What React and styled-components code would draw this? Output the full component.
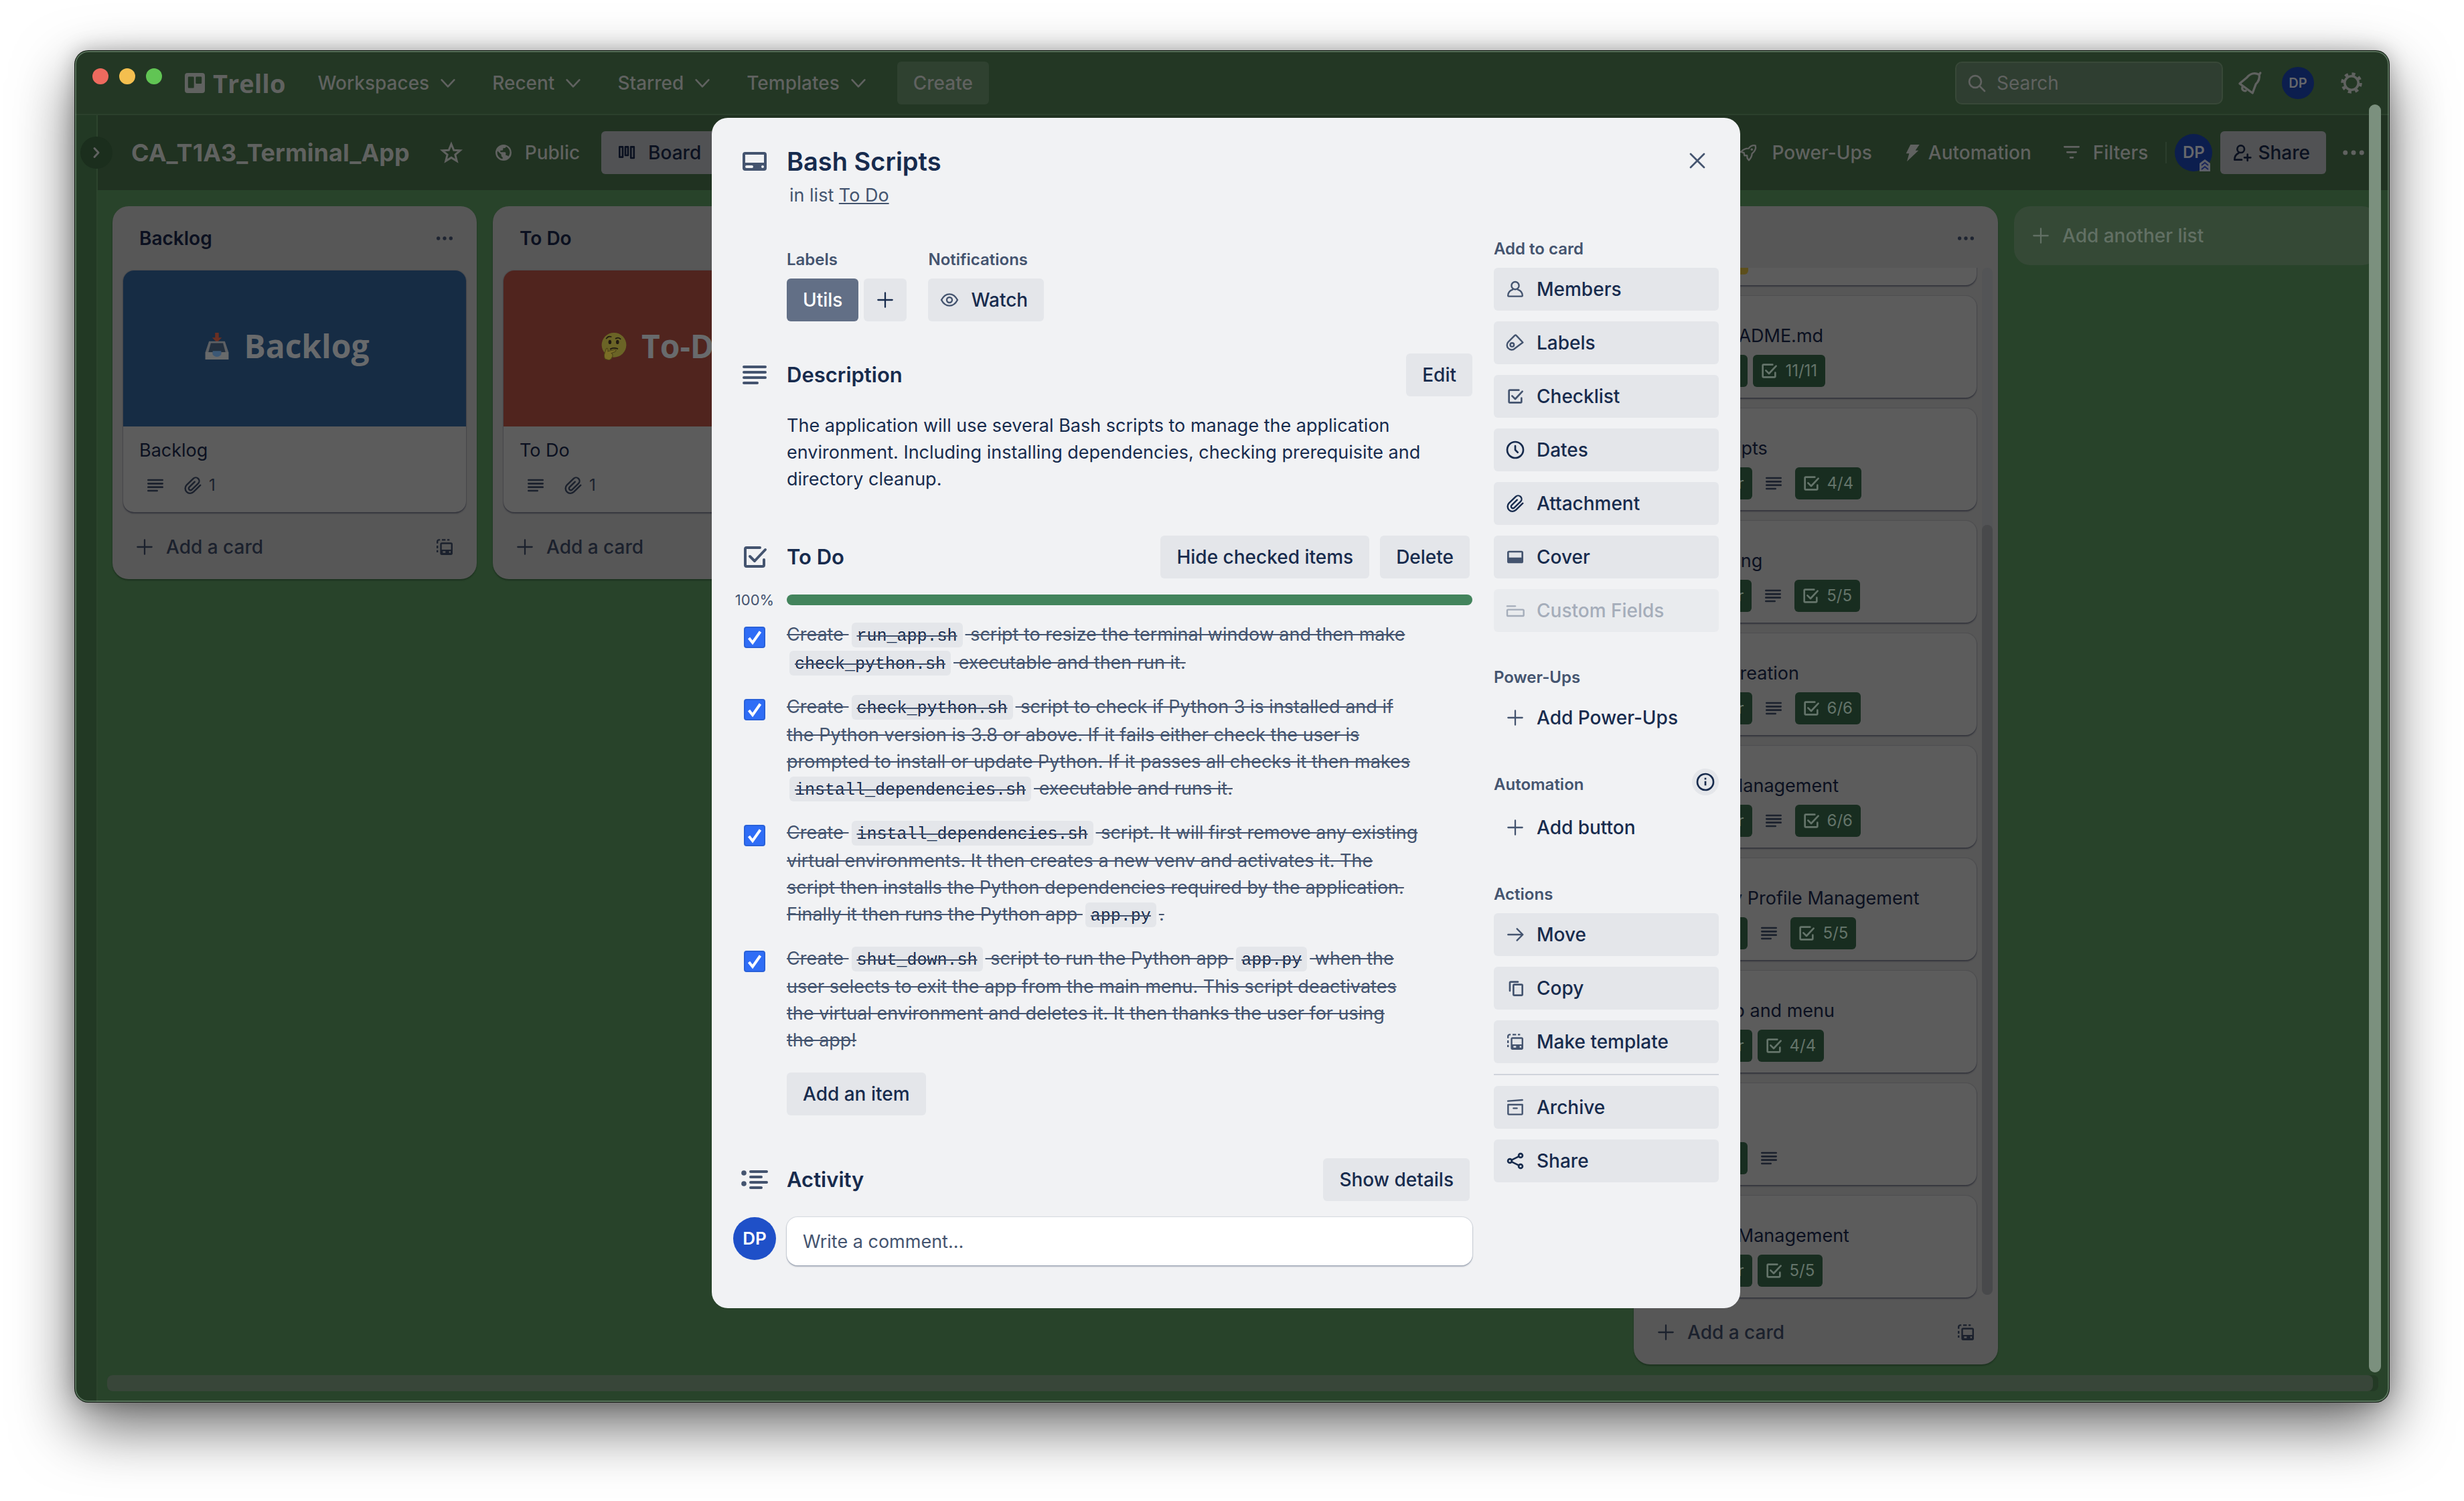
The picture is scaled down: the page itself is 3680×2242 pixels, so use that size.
import React from 'react';
import styled, { createGlobalStyle, css } from 'styled-components';

const GlobalStyle = createGlobalStyle`
  *, *::before, *::after { box-sizing: border-box; }
  body {
    margin: 0;
    background: #fff;
    font-family: Inter, "Liberation Sans", sans-serif;
    font-size: 28px;
    line-height: 40px;
  }
  button, input { font: inherit; color: inherit; border: 0; margin: 0; padding: 0; background: none; }
  h1, h2, h3, p, ul { margin: 0; padding: 0; font-weight: inherit; font-size: inherit; }
  ul { list-style: none; }
  a { color: inherit; }
`;

/* ---------- icons ---------- */

const Svg = styled.svg`
  flex: none;
  display: block;
  width: ${p => p.$size}px;
  height: ${p => p.$size}px;
  color: ${p => p.$tone || 'inherit'};
`;

const S = { fill: 'none', stroke: 'currentColor', strokeWidth: 2, strokeLinecap: 'round', strokeLinejoin: 'round' };

const SHAPES = {
  card: (
    <path fill="currentColor" fillRule="evenodd" d="M3 7a2 2 0 0 1 2-2h14a2 2 0 0 1 2 2v10a2 2 0 0 1-2 2H5a2 2 0 0 1-2-2zM5 7h14v6H5zM6 15h4a1 1 0 0 1 0 2H6a1 1 0 0 1 0-2zM18 15a1 1 0 1 1 0 2 1 1 0 0 1 0-2z" />
  ),
  lines: <path {...S} d="M4 6h16M4 10h16M4 14h16M4 18h10" />,
  check: <path {...S} d="M16 5H6a1 1 0 0 0-1 1v12a1 1 0 0 0 1 1h12a1 1 0 0 0 1-1v-4M8.500 11.500l3.500 3.500 8-8.500" />,
  activity: (
    <>
      <path {...S} d="M9 6h12M9 10h8M9 14h12M9 18h8" />
      <circle cx="4" cy="7" r="1.900" fill="currentColor" />
      <circle cx="4" cy="15" r="1.900" fill="currentColor" />
    </>
  ),
  user: (
    <>
      <circle {...S} strokeWidth="1.800" cx="12" cy="8" r="4.200" />
      <path {...S} strokeWidth="1.800" d="M9 12.500c-3 1-5 3.500-5.100 6.600 0 .6.400.9.900.9h14.400c.5 0 .9-.300.900-.900-.100-3.100-2.100-5.600-5.100-6.600" />
    </>
  ),
  tag: (
    <>
      <path {...S} strokeWidth="1.800" d="M11.600 3.700 4.300 11a5 5 0 0 0 0 7.200 5 5 0 0 0 7.200.200l9-6.800-7.300-7.700a1.200 1.200 0 0 0-1.600-.200z" />
      <circle {...S} strokeWidth="1.800" cx="8.500" cy="14.300" r="2.100" />
    </>
  ),
  clock: (
    <>
      <circle {...S} cx="12" cy="12" r="9" />
      <path {...S} d="M12 7.500V12l2.800 2.800" />
    </>
  ),
  clip: <path {...S} strokeWidth="1.800" d="m20.500 11.800-7.700 7.500a5.400 5.400 0 0 1-7.700 0 5.400 5.400 0 0 1 0-7.700l7.400-7.200a3.900 3.900 0 0 1 5.500 0 3.900 3.900 0 0 1 0 5.500l-7.100 6.900a2 2 0 0 1-2.900 0 2 2 0 0 1 0-2.900l6.100-5.900" />,
  cover: <path fill="currentColor" fillRule="evenodd" d="M3 7a2 2 0 0 1 2-2h14a2 2 0 0 1 2 2v10a2 2 0 0 1-2 2H5a2 2 0 0 1-2-2zM5 7h14v5.500H5z" />,
  fields: (
    <>
      <path {...S} strokeWidth="1.800" d="M3 7h9" />
      <rect {...S} strokeWidth="1.800" x="3" y="11" width="18.500" height="7" rx="1" />
    </>
  ),
  plus: <path {...S} strokeWidth="1.700" d="M12 4v16M4 12h16" />,
  arrow: <path {...S} strokeWidth="1.800" d="M4 12h16M14 5.500l6.500 6.500-6.500 6.500" />,
  copy: (
    <>
      <path {...S} d="M6 15V6a1 1 0 0 1 1-1h8" />
      <rect {...S} x="10" y="8" width="10" height="12" rx="1" />
    </>
  ),
  template: (
    <>
      <path fill="currentColor" fillRule="evenodd" d="M7 9a2 2 0 0 1 2-2h10a2 2 0 0 1 2 2v10a2 2 0 0 1-2 2H9a2 2 0 0 1-2-2zM8.800 8.800h10.400V15H8.800zM10 16.700h3v1.800h-3zM17 16.700h1.800v1.800H17z" />
      <path {...S} strokeWidth="1.800" strokeLinecap="butt" d="M3.900 8V6a2 2 0 0 1 2-2h1M9 4h4M15 4h2.500M3.900 10.500v3M3.900 15.500V18" />
    </>
  ),
  archive: (
    <>
      <path {...S} strokeWidth="1.800" d="M3.800 5 20 3.800" />
      <path {...S} strokeWidth="1.800" d="M4 9h16v10a1 1 0 0 1-1 1H5a1 1 0 0 1-1-1zM10 13h4" />
    </>
  ),
  share: (
    <>
      <circle {...S} cx="6" cy="12" r="2.200" />
      <circle {...S} cx="18" cy="6" r="2.200" />
      <circle {...S} cx="18" cy="18" r="2.200" />
      <path {...S} d="m8 11 8-4M8 13l8 4" />
    </>
  ),
  eye: (
    <>
      <path {...S} strokeWidth="1.800" d="M3 12C5.200 7.800 8.400 5.500 12 5.500s6.800 2.300 9 6.500c-2.200 4.200-5.400 6.500-9 6.500S5.200 16.200 3 12z" />
      <circle {...S} strokeWidth="1.800" cx="12" cy="12" r="3" />
    </>
  ),
  info: (
    <>
      <circle {...S} cx="12" cy="12" r="9" />
      <path {...S} strokeLinecap="butt" d="M12 11v5M12 7.300v2" />
    </>
  ),
  close: <path {...S} strokeWidth="2" d="m4.500 4.500 15 15M19.500 4.500l-15 15" />,
  down: <path {...S} d="m5 8.500 7 7.500 7-7.500" />,
  right: <path {...S} strokeWidth="3" d="m9 5.500 6 6.500-6 6.500" />,
  star: <path {...S} strokeLinejoin="miter" d="m12 3.500 2.500 6 6.300.400-4.900 4.100 1.600 6.300L12 16.900l-5.500 3.400 1.600-6.300-4.900-4.100 6.300-.400z" />,
  globe: <path fill="currentColor" fillRule="evenodd" d="M12 3a9 9 0 1 0 0 18 9 9 0 0 0 0-18zm-1 16a7 7 0 0 1-5.700-8.800L9.500 14v1c0 1 .5 2 1.500 2zm6.300-2.600c-.3-.800-1-1.400-1.900-1.400H14.500v-2.500c0-.500-.500-1-1-1h-5V9.500h2c.600 0 1-.500 1-1v-1.500h1.500c1 0 1.800-.800 1.800-1.700A7 7 0 0 1 17.300 16.400z" />,
  board: <path {...S} d="M4 5.500h3.500V17H4zM10.500 5.500h3V15h-3zM16.700 5.500h3.400V18h-3.400z" />,
  rocket: (
    <>
      <path {...S} strokeWidth="1.800" d="M20 4c-3-.6-5.500.4-7.500 3.200-3.500 0-6.500 1.300-8.700 4l3.400 1 .6 3h2.800l.4 3.200 1.700 2.100c2.300-2.300 3.500-4.500 3.500-7.300C19.500 10.500 21 7.500 20 4z" />
      <circle cx="16" cy="8.500" r="1.300" fill="currentColor" />
    </>
  ),
  bolt: <path fill="currentColor" d="M10 3h10l-4.500 6.500H19L6 22l2.500-9H5z" />,
  filter: <path {...S} d="M4 5.500h16M7 11.500h10M10.500 17.500h3" />,
  useradd: (
    <>
      <circle {...S} cx="11" cy="8" r="4" />
      <path {...S} d="M12 20H4c0-3.500 1.500-6.200 4.500-7.500M18.500 14v7M15 17.500h7" />
    </>
  ),
  dots: (
    <>
      <circle cx="5" cy="12" r="2" fill="currentColor" />
      <circle cx="12" cy="12" r="2" fill="currentColor" />
      <circle cx="19" cy="12" r="2" fill="currentColor" />
    </>
  ),
  search: (
    <>
      <circle {...S} cx="10.500" cy="10.500" r="6.700" />
      <path {...S} d="m15.500 15.500 5.500 5.500" />
    </>
  ),
  bell: (
    <>
      <path {...S} d="M20.500 4.500c-4-2-8-1-11 2.500L3 12.500 14.500 21l3-8c3-3 3.500-5.500 3-8.500z" />
      <path {...S} d="M20.500 4.500 21.500 3M5.500 15.500c-.8 2 .5 4 3 3.500" />
    </>
  ),
  gear: (
    <>
      <circle {...S} strokeWidth="2.400" cx="12" cy="12" r="6.800" />
      <circle {...S} strokeWidth="3" strokeLinecap="butt" strokeDasharray="3.400 3.670" cx="12" cy="12" r="9" />
    </>
  ),
};

const Icon = ({ name, size = 32, tone }) => (
  <Svg viewBox="0 0 24 24" $size={size} $tone={tone} aria-hidden="true">{SHAPES[name]}</Svg>
);

/* ---------- window ---------- */

const Desktop = styled.div`
  padding: 76px 112px 148px;
  min-height: 100vh;
`;

const Window = styled.div`
  position: relative;
  display: flex;
  flex-direction: column;
  height: calc(100vh - 224px);
  min-height: 2018px;
  overflow: hidden;
  border-radius: 20px;
  background: #28432a;
  box-shadow: 0 0 0 1px #0c140d;
`;

const Shadow = styled.div`
  border-radius: 20px;
  box-shadow: 0 36px 90px rgba(0, 0, 0, 0.6), 0 0 30px rgba(0, 0, 0, 0.25);
`;

const Rim = styled.div`
  position: absolute;
  inset: 0;
  border: 2px solid rgba(150, 180, 155, 0.45);
  border-radius: 20px;
  pointer-events: none;
`;

const Lights = styled.div`
  display: flex;
  gap: 16px;
  align-self: flex-start;
  padding-top: 24px;
  margin-right: 34px;
`;

const Light = styled.span`
  width: 24px;
  height: 24px;
  border-radius: 50%;
  background: ${p => p.$color};
`;

const light = '#606260';

const TopBar = styled.header`
  display: flex;
  align-items: center;
  flex: none;
  height: 96px;
  padding: 2px 38px 0 26px;
  background: #233724;
  border-bottom: 2px solid #2b402c;
  color: ${light};
  font-weight: 500;
`;

const Logo = styled.a`
  display: flex;
  align-items: center;
  gap: 12px;
  margin-right: 48px;
  font: 700 38px/48px "Open Sans", sans-serif;
  text-decoration: none;
`;

const Menus = styled.nav`
  display: flex;
  align-items: center;
  gap: 50px;
`;

const MenuButton = styled.button`
  display: flex;
  align-items: center;
  gap: 12px;
`;

const CreateButton = styled.button`
  height: 64px;
  padding: 0 24px;
  margin-left: 42px;
  border-radius: 6px;
  background: #2f4130;
`;

const SearchBox = styled.label`
  display: flex;
  align-items: center;
  gap: 14px;
  width: 400px;
  height: 64px;
  margin-left: auto;
  padding: 0 16px 0 14px;
  border: 2px solid #384838;
  border-radius: 10px;
  background: #2f3e31;
  input { width: 100%; font-weight: 400; outline: 0; }
  input::placeholder { color: ${light}; opacity: 1; }
`;

const TopActions = styled.div`
  display: flex;
  align-items: center;
  gap: 28px;
  margin-left: 20px;
`;

const IconButton = styled.button`
  display: flex;
  margin-left: ${p => p.$space || 0}px;
`;

const Avatar = styled.span`
  position: relative;
  display: flex;
  align-items: center;
  justify-content: center;
  flex: none;
  width: ${p => p.$size}px;
  height: ${p => p.$size}px;
  border-radius: 50%;
  background: ${p => p.$bg || '#0c1e4e'};
  color: ${p => p.$fg || '#66676b'};
  font-weight: 600;
  font-size: ${p => p.$font}px;
`;

const AdminBadge = styled.svg`
  position: absolute;
  right: 2px;
  bottom: 0;
  width: 18px;
  height: 18px;
`;

const Below = styled.div`
  display: flex;
  flex: 1;
  min-height: 0;
`;

const Rail = styled.aside`
  position: relative;
  flex: none;
  width: 34px;
  background: #223924;
  border-right: 2px solid #2c442d;
`;

const RailToggle = styled.button`
  position: absolute;
  top: 32px;
  left: 8px;
  z-index: 1;
  display: flex;
  align-items: center;
  justify-content: center;
  width: 48px;
  height: 48px;
  border-radius: 50%;
  background: #1b2e1d;
  color: ${light};
`;

const Workspace = styled.main`
  display: flex;
  flex-direction: column;
  flex: 1;
  min-width: 0;
`;

const BoardBar = styled.div`
  display: flex;
  align-items: center;
  justify-content: space-between;
  flex: none;
  height: 112px;
  padding: 0 32px 0 50px;
  background: #203221;
  color: ${light};
`;

const BarGroup = styled.div`
  display: flex;
  align-items: center;
  gap: ${p => p.$gap}px;
`;

const BoardName = styled.h1`
  font-size: 36px;
  font-weight: 700;
  line-height: 48px;
`;

const BarButton = styled.button`
  display: flex;
  align-items: center;
  gap: ${p => p.$gap || 16}px;
  height: 64px;
  font-weight: 500;
  ${p => p.$solid && css`
    padding: 0 24px 0 ${p.$pad || 16}px;
    border-radius: 6px;
    background: #515254;
    color: #0b1120;
  `}
`;

const Divider = styled.span`
  width: 2px;
  height: 32px;
  background: #2b3d2c;
`;

const Lists = styled.div`
  display: flex;
  justify-content: space-between;
  flex: 1;
  min-height: 0;
  padding: 24px 16px 16px 22px;
`;

const ListGroup = styled.div`
  display: flex;
  align-items: flex-start;
  gap: 24px;
`;

const HScroll = styled.div`
  flex: none;
  height: 24px;
  margin: 0 16px 16px 14px;
  padding-right: 8px;
  border-radius: 8px;
  background: #233a25;
  span { display: block; height: 24px; border-radius: 8px; background: #384639; }
`;

const ListBox = styled.section`
  display: flex;
  flex-direction: column;
  width: 544px;
  border-radius: 24px;
  background: #575757;
  color: #0b1020;
  box-shadow: 0 2px 2px rgba(9, 20, 12, 0.35);
  ${p => p.$full && css`align-self: stretch; min-height: 0;`}
`;

const ListHead = styled.div`
  display: flex;
  align-items: center;
  justify-content: space-between;
  flex: none;
  height: 92px;
  padding: 4px 32px 0 40px;
  h2 { font-weight: 600; }
  button { color: #1e2431; }
`;

const ListFoot = styled.div`
  display: flex;
  align-items: center;
  justify-content: space-between;
  flex: none;
  height: 96px;
  padding: 0 32px;
  color: #1b212d;
  button { display: flex; align-items: center; gap: 16px; font-weight: 500; }
`;

const CardStack = styled.div`
  display: flex;
  flex-direction: column;
  padding: 4px 16px;
`;

const Scroller = styled.div`
  display: flex;
  gap: 8px;
  flex: 1;
  min-height: 0;
  padding: 0 8px 4px 16px;
  overflow: hidden;
`;

const ScrolledCards = styled.div`
  display: flex;
  flex-direction: column;
  justify-content: flex-end;
  gap: 16px;
  flex: 1;
  min-width: 0;
`;

const Track = styled.div`
  display: flex;
  align-items: flex-end;
  width: 16px;
  margin-bottom: 4px;
  border-radius: 8px;
  background: #535456;
  span { width: 16px; height: 75%; border-radius: 8px; background: #48494b; }
`;

const CardBox = styled.article`
  flex: none;
  overflow: hidden;
  border-radius: 16px;
  background: #5c5c5c;
  box-shadow: 0 2px 2px rgba(9, 12, 30, 0.4), 0 0 1px 1px rgba(9, 12, 30, 0.1);
`;

const Cover = styled.div`
  display: flex;
  align-items: center;
  justify-content: center;
  gap: 20px;
  height: 233px;
  padding: 0 24px 8px 0;
  background: ${p => p.$bg};
  color: #686a6c;
  font: 700 48px/64px "Open Sans", sans-serif;
`;

const CardBody = styled.div`
  display: flex;
  flex-direction: column;
  gap: 8px;
  padding: 16px 24px;
  white-space: nowrap;
  h3 { font-size: 27px; }
`;

const ColorLabel = styled.span`
  width: 80px;
  height: 16px;
  border-radius: 8px;
  background: #2b303a;
`;

const Badges = styled.div`
  display: flex;
  gap: 8px;
  height: 48px;
`;

const Badge = styled.span`
  display: flex;
  align-items: center;
  gap: 8px;
  height: 48px;
  padding: 0 ${p => (p.$plain ? 8 : 12)}px 0 8px;
  border-radius: 6px;
  color: ${p => (p.$plain ? '#1b212d' : '#64746a')};
  background: ${p => p.$bg || 'none'};
  font-size: 24px;
`;

const AddList = styled.button`
  display: flex;
  align-items: center;
  gap: 16px;
  width: 544px;
  height: 88px;
  padding: 0 24px;
  border-radius: 24px;
  background: #354936;
  color: #627064;
  font-weight: 500;
`;

const Inbox = () => (
  <Svg viewBox="2 1 20 22" $size={40} aria-hidden="true">
    <path fill="#6a2f22" d="M10.500 1h3v4h2.500l-4 4-4-4h2.500z" />
    <path fill="#5d6064" d="M5.500 8h13l3 9v6h-19v-6z" />
    <path fill="#23303f" d="M7 9.500h10l2 7.500H5z" />
    <path fill="#3c5876" d="M8.500 16h7v3a3.500 3.500 0 0 1-7 0z" />
    <path fill="#686a6b" d="M2.500 17h5.500c0 5 8 5 8 0h5.500v6h-19z" />
  </Svg>
);

const Thinking = () => (
  <Svg viewBox="1 0 22 24" $size={42} aria-hidden="true">
    <circle cx="12" cy="11" r="10.500" fill="#6b6426" />
    <ellipse cx="8.500" cy="8.500" rx="1.300" ry="1.800" fill="#221a12" />
    <ellipse cx="15" cy="8.500" rx="1.300" ry="1.800" fill="#221a12" />
    <path d="M5.500 5.500c1-1.500 2.500-2 4-1.500M13.500 5.500c1.500-.8 3-.6 4 .4M9 14.500c2-1 4-1 6-.3" fill="none" stroke="#221a12" strokeWidth="1" strokeLinecap="round" />
    <path d="M4.500 23c-2-3 0-6 1-9 1-.6 1.500.5 1.300 2.500l6-1.700c1.300 0 1.200 1.500 0 2l-3 1.200c2 1 1 5-2 6z" fill="#7a6d26" stroke="#4c4318" strokeWidth=".6" />
  </Svg>
);

const COVERED = [
  { title: 'Backlog', cover: 'Backlog', bg: '#162c44', art: <Inbox /> },
  { title: 'To Do', cover: 'To-Do', bg: '#50241e', art: <Thinking /> },
];

const DONE = [
  { title: 'Project Plan', date: '12 Apr', late: true },
  { title: 'Finish README.md', date: '17 Apr', count: '11/11' },
  { title: 'Bash Scripts', date: '28 Apr', lines: true, count: '4/4' },
  { title: 'Unit Testing', date: '25 Apr', lines: true, count: '5/5' },
  { title: 'Budget Creation', date: '26 Apr', lines: true, count: '6/6' },
  { title: 'Budget Management', date: '26 Apr', lines: true, count: '6/6' },
  { title: 'Company Profile Management', date: '17 Apr', lines: true, count: '5/5' },
  { title: 'Env setup and menu', date: '23 Apr', count: '4/4' },
  { title: 'Logging', date: '17 Apr', lines: true },
  { title: 'Workout Management', date: '23 Apr', count: '5/5' },
];

const ListHeader = ({ title }) => (
  <ListHead>
    <h2>{title}</h2>
    <button aria-label="List actions"><Icon name="dots" /></button>
  </ListHead>
);

const ListFooter = () => (
  <ListFoot>
    <button><Icon name="plus" />Add a card</button>
    <button aria-label="Create from template"><Icon name="template" /></button>
  </ListFoot>
);

const CoveredList = ({ title, cover, bg, art }) => (
  <ListBox>
    <ListHeader title={title} />
    <CardStack>
      <CardBox>
        <Cover $bg={bg}>{art}{cover}</Cover>
        <CardBody>
          <h3>{title}</h3>
          <Badges>
            <Badge $plain><Icon name="lines" /></Badge>
            <Badge $plain><Icon name="clip" />1</Badge>
          </Badges>
        </CardBody>
      </CardBox>
    </CardStack>
    <ListFooter />
  </ListBox>
);

const DoneCard = ({ title, date, late, lines, count }) => (
  <CardBox>
    <CardBody>
      <ColorLabel />
      <h3>{title}</h3>
      <Badges>
        <Badge $bg={late ? '#5d4f1c' : '#182d20'}><Icon name="clock" />{date}</Badge>
        {lines && <Badge $plain><Icon name="lines" /></Badge>}
        {count && <Badge $bg="#182d20"><Icon name="check" />{count}</Badge>}
      </Badges>
    </CardBody>
  </CardBox>
);

/* ---------- card dialog ---------- */

const Overlay = styled.div`
  position: absolute;
  inset: 0;
  display: flex;
  justify-content: center;
  align-items: flex-start;
  padding: 100px 18px 0 0;
`;

const VScroll = styled.span`
  position: absolute;
  top: 80px;
  right: 12px;
  bottom: 44px;
  width: 18px;
  border-radius: 9px;
  background: #7b907e;
`;

const ink = '#172b4d';
const subtle = '#44546f';

const Dialog = styled.div`
  position: relative;
  width: 1536px;
  padding: 40px 32px 64px;
  border-radius: 24px;
  background: #f1f2f4;
  color: ${ink};
`;

const CloseButton = styled.button`
  position: absolute;
  top: 48px;
  right: 48px;
  display: flex;
  color: ${subtle};
`;

const Row = styled.div`
  display: grid;
  grid-template-columns: 64px minmax(0, 1fr);
  column-gap: 16px;
  align-items: ${p => p.$align || 'center'};
  margin-top: ${p => p.$top || 0}px;
`;

const Gutter = styled.div`
  display: flex;
  justify-content: center;
  grid-column: 1;
  color: ${subtle};
`;

const Content = styled.div`
  grid-column: 2;
`;

const Title = styled.h2`
  font-size: 38px;
  font-weight: 600;
  line-height: 50px;
`;

const InList = styled.p`
  padding: 6px 0 0 4px;
  color: ${subtle};
  font-size: 27px;
`;

const DialogBody = styled.div`
  display: flex;
  gap: 32px;
  margin-top: 44px;
`;

const Main = styled.div`
  flex: 1;
  min-width: 0;
  padding-top: 16px;
`;

const Side = styled.aside`
  flex: none;
  width: 336px;
`;

const Small = styled.h3`
  color: ${subtle};
  font-size: 24px;
  font-weight: 600;
  line-height: 32px;
  margin-bottom: 12px;
`;

const Fields = styled.div`
  display: flex;
  gap: 32px;
`;

const Inline = styled.div`
  display: flex;
  gap: 8px;
`;

const Button = styled.button`
  display: inline-flex;
  align-items: center;
  gap: 16px;
  height: 64px;
  padding: 0 24px 0 ${p => (p.$icon ? 16 : 24)}px;
  border-radius: 6px;
  background: ${p => p.$bg || '#e4e6ea'};
  color: ${p => p.$fg || ink};
  font-weight: 500;
  white-space: nowrap;
  ${p => p.$square && css`width: 64px; padding: 0; justify-content: center;`}
`;

const SectionHead = styled.div`
  display: flex;
  align-items: center;
  gap: 16px;
  padding-right: ${p => p.$inset || 0}px;
  h3 { flex: 1; font-size: 31px; font-weight: 600; }
`;

const Prose = styled.p`
  padding-right: 48px;
  font-size: 27px;
`;

const Percent = styled.span`
  font-size: 22px;
  line-height: 16px;
`;

const Meter = styled.div`
  height: 16px;
  border-radius: 8px;
  background: #43845c;
`;

const Items = styled.ul`
  margin-top: 12px;
`;

const Item = styled.li`
  padding: 12px 0;
`;

const Tick = styled.span`
  display: grid;
  margin-top: 8px;
  input, svg { grid-area: 1 / 1; }
  input {
    appearance: none;
    width: 32px;
    height: 32px;
    border: 2px solid #2961d9;
    border-radius: 4px;
    background: #2f6df6;
  }
`;

const ItemText = styled.label`
  display: block;
  padding-right: 76px;
  color: ${subtle};
  font-size: 27px;
  text-decoration: line-through;
  text-decoration-thickness: 2px;
`;

const Code = styled.code`
  display: inline-block;
  margin: 0 4px 3px;
  padding: 4px 8px 0;
  border-radius: 6px;
  background: #e4e6ea;
  color: ${ink};
  font: 25px/33px "Liberation Mono", monospace;
  text-decoration: line-through;
  text-decoration-thickness: 2px;
  text-decoration-color: ${subtle};
`;

const Comment = styled.input`
  width: 100%;
  height: 72px;
  padding: 0 24px;
  border-radius: 16px;
  background: #fff;
  font-size: 27px;
  box-shadow: 0 2px 2px rgba(9, 30, 66, 0.28), 0 0 1px 1px rgba(9, 30, 66, 0.12);
  &::placeholder { color: ${subtle}; opacity: 1; }
`;

const SideGroup = styled.section`
  & + & { margin-top: 52px; }
`;

const SideList = styled.div`
  display: flex;
  flex-direction: column;
  gap: 16px;
`;

const SideButton = styled.button`
  display: flex;
  align-items: center;
  gap: 16px;
  height: 64px;
  padding: 0 16px;
  border-radius: 6px;
  background: ${p => (p.$ghost ? 'none' : '#e4e6ea')};
  font-weight: 500;
  text-align: left;
  &:disabled { background: #e9ebee; color: #a5adba; }
`;

const SideHead = styled.div`
  display: flex;
  justify-content: space-between;
  height: 48px;
`;

const InfoButton = styled.button`
  display: flex;
  align-items: center;
  justify-content: center;
  width: 40px;
  height: 40px;
  margin-top: -8px;
  border-radius: 50%;
  background: #e4e6ea;
`;

const Rule = styled.hr`
  width: 100%;
  height: 2px;
  margin: 0;
  border: 0;
  background: #d0d4db;
`;

const TODOS = [
  ['Create ', ['run_app.sh'], ' script to resize the terminal window and then make ', ['check_python.sh'], ' executable and then run it.'],
  ['Create ', ['check_python.sh'], ' script to check if Python 3 is installed and if the Python version is 3.8 or above. If it fails either check the user is prompted to install or update Python. If it passes all checks it then makes ', ['install_dependencies.sh'], ' executable and runs it.'],
  ['Create ', ['install_dependencies.sh'], ' script. It will first remove any existing virtual environments. It then creates a new venv and activates it. The script then installs the Python dependencies required by the application. Finally it then runs the Python app ', ['app.py'], '.'],
  ['Create ', ['shut_down.sh'], ' script to run the Python app ', ['app.py'], ' when the user selects to exit the app from the main menu. This script deactivates the virtual environment and deletes it. It then thanks the user for using the\u00a0app!'],
];

const SIDE_ADD = [
  ['user', 'Members', subtle], ['tag', 'Labels', subtle], ['check', 'Checklist', subtle],
  ['clock', 'Dates', ink], ['clip', 'Attachment', ink], ['cover', 'Cover', subtle],
];

const SideAction = ({ icon, tone = subtle, children, ...rest }) => (
  <SideButton {...rest}><Icon name={icon} tone={tone} />{children}</SideButton>
);

const Todo = ({ parts, id }) => (
  <Item>
    <Row $align="start">
      <Gutter>
        <Tick>
          <input type="checkbox" id={id} defaultChecked />
          <svg viewBox="0 0 32 32" width="32" height="32" pointerEvents="none">
            <path d="M7.500 17 13 24 24.500 7.500" fill="none" stroke="#fff" strokeWidth="4" />
          </svg>
        </Tick>
      </Gutter>
      <Content>
        <ItemText htmlFor={id}>
          {parts.map((part, i) => (Array.isArray(part) ? <Code key={i}>{part[0]}</Code> : part))}
        </ItemText>
      </Content>
    </Row>
  </Item>
);

const CardDialog = () => (
  <Dialog role="dialog" aria-labelledby="card-title">
    <CloseButton aria-label="Close"><Icon name="close" /></CloseButton>
    <Row>
      <Gutter><Icon name="card" size={48} /></Gutter>
      <Content><Title id="card-title">Bash Scripts</Title></Content>
      <Content><InList>in list <a href="#to-do">To Do</a></InList></Content>
    </Row>
    <DialogBody>
      <Main>
        <Row>
          <Content>
            <Fields>
              <div>
                <Small>Labels</Small>
                <Inline>
                  <Button $bg="#626f86" $fg="#fff">Utils</Button>
                  <Button $square aria-label="Add label"><Icon name="plus" /></Button>
                </Inline>
              </div>
              <div>
                <Small>Notifications</Small>
                <Button $icon><Icon name="eye" tone={subtle} />Watch</Button>
              </div>
            </Fields>
          </Content>
        </Row>
        <Row $top={48}>
          <Gutter><Icon name="lines" size={48} /></Gutter>
          <SectionHead><h3>Description</h3><Button>Edit</Button></SectionHead>
        </Row>
        <Row $top={24}>
          <Content>
            <Prose>The application will use several Bash scripts to manage the application environment. Including installing dependencies, checking prerequisite and directory cleanup.</Prose>
          </Content>
        </Row>
        <Row $top={64}>
          <Gutter><Icon name="check" size={48} /></Gutter>
          <SectionHead $inset={4}><h3>To Do</h3><Button>Hide checked items</Button><Button>Delete</Button></SectionHead>
        </Row>
        <Row $top={24}>
          <Gutter><Percent>100%</Percent></Gutter>
          <Meter />
        </Row>
        <Items>
          {TODOS.map((parts, i) => <Todo key={i} id={`todo-${i}`} parts={parts} />)}
        </Items>
        <Row $top={16}>
          <Content><Button>Add an item</Button></Content>
        </Row>
        <Row $top={64}>
          <Gutter><Icon name="activity" size={48} /></Gutter>
          <SectionHead $inset={4}><h3>Activity</h3><Button>Show details</Button></SectionHead>
        </Row>
        <Row $top={24} $align="start">
          <Gutter><Avatar $size={64} $font={26} $bg="#1f50c8" $fg="#fff">DP</Avatar></Gutter>
          <Comment aria-label="Write a comment" placeholder="Write a comment…" />
        </Row>
      </Main>
      <Side>
        <SideGroup>
          <Small>Add to card</Small>
          <SideList>
            {SIDE_ADD.map(([icon, text, tone]) => <SideAction key={text} icon={icon} tone={tone}>{text}</SideAction>)}
            <SideAction icon="fields" tone="#a5adba" disabled>Custom Fields</SideAction>
          </SideList>
        </SideGroup>
        <SideGroup>
          <Small>Power-Ups</Small>
          <SideList><SideAction $ghost icon="plus">Add Power-Ups</SideAction></SideList>
        </SideGroup>
        <SideGroup>
          <SideHead>
            <Small>Automation</Small>
            <InfoButton aria-label="About automation"><Icon name="info" /></InfoButton>
          </SideHead>
          <SideList><SideAction $ghost icon="plus">Add button</SideAction></SideList>
        </SideGroup>
        <SideGroup>
          <Small>Actions</Small>
          <SideList>
            <SideAction icon="arrow">Move</SideAction>
            <SideAction icon="copy">Copy</SideAction>
            <SideAction icon="template">Make template</SideAction>
            <Rule />
            <SideAction icon="archive">Archive</SideAction>
            <SideAction icon="share" tone={ink}>Share</SideAction>
          </SideList>
        </SideGroup>
      </Side>
    </DialogBody>
  </Dialog>
);

export default function App() {
  return (
    <Desktop>
      <GlobalStyle />
      <Shadow>
        <Window>
          <TopBar>
            <Lights>
              <Light $color="#ed6a5e" /><Light $color="#f4bf4f" /><Light $color="#61c554" />
            </Lights>
            <Logo href="#home">
              <svg viewBox="0 0 30 30" width="30" height="30" aria-hidden="true">
                <path fill="currentColor" fillRule="evenodd" d="M4 0h22a4 4 0 0 1 4 4v22a4 4 0 0 1-4 4H4a4 4 0 0 1-4-4V4a4 4 0 0 1 4-4zM6 5.500h6.500a1.200 1.200 0 0 1 1.200 1.200v14.600a1.200 1.200 0 0 1-1.200 1.200H6a1.200 1.200 0 0 1-1.200-1.200V6.700A1.200 1.200 0 0 1 6 5.500zm11.500 0H24a1.200 1.200 0 0 1 1.200 1.200v8.100A1.200 1.200 0 0 1 24 16h-6.500a1.200 1.200 0 0 1-1.200-1.200V6.700a1.200 1.200 0 0 1 1.200-1.200z" />
              </svg>
              Trello
            </Logo>
            <Menus>
              {['Workspaces', 'Recent', 'Starred', 'Templates'].map(name => (
                <MenuButton key={name}>{name}<Icon name="down" /></MenuButton>
              ))}
            </Menus>
            <CreateButton>Create</CreateButton>
            <SearchBox>
              <Icon name="search" />
              <input type="search" placeholder="Search" aria-label="Search" />
            </SearchBox>
            <TopActions>
              <IconButton aria-label="Notifications"><Icon name="bell" size={40} /></IconButton>
              <Avatar $size={48} $font={20}>DP</Avatar>
              <IconButton $space={10} aria-label="Settings"><Icon name="gear" size={36} /></IconButton>
            </TopActions>
          </TopBar>
          <Below>
            <Rail>
              <RailToggle aria-label="Expand sidebar"><Icon name="right" size={24} /></RailToggle>
            </Rail>
            <Workspace>
              <BoardBar>
                <BarGroup $gap={44}>
                  <BoardName>CA_T1A3_Terminal_App</BoardName>
                  <IconButton aria-label="Star board"><Icon name="star" size={36} /></IconButton>
                  <BarGroup $gap={32}>
                    <BarButton><Icon name="globe" />Public</BarButton>
                    <BarButton $solid $pad={22}><Icon name="board" />Board</BarButton>
                  </BarGroup>
                </BarGroup>
                <BarGroup $gap={26}>
                  <BarGroup $gap={44}>
                    <BarButton $gap={20}><Icon name="rocket" />Power-Ups</BarButton>
                    <BarButton $gap={8}><Icon name="bolt" />Automation</BarButton>
                    <BarButton><Icon name="filter" />Filters</BarButton>
                  </BarGroup>
                  <BarGroup $gap={12}>
                    <Divider />
                    <Avatar $size={56} $font={24}>
                      DP
                      <AdminBadge viewBox="0 0 18 18" aria-hidden="true">
                        <path fill="#5d6068" d="M9 0l8 6v12H1V6z" />
                        <path d="m4 9 5-4 5 4M4 15l5-4 5 4" fill="none" stroke="#17235a" strokeWidth="2" />
                      </AdminBadge>
                    </Avatar>
                    <BarButton $solid $gap={8}><Icon name="useradd" />Share</BarButton>
                    <IconButton $space={8} aria-label="More"><Icon name="dots" size={42} /></IconButton>
                  </BarGroup>
                </BarGroup>
              </BoardBar>
              <Lists>
                <ListGroup>
                  {COVERED.map(list => <CoveredList key={list.title} {...list} />)}
                </ListGroup>
                <ListGroup>
                  <ListBox $full>
                    <ListHeader />
                    <Scroller>
                      <ScrolledCards>
                        {DONE.map(card => <DoneCard key={card.title} {...card} />)}
                      </ScrolledCards>
                      <Track><span /></Track>
                    </Scroller>
                    <ListFooter />
                  </ListBox>
                  <AddList><Icon name="plus" />Add another list</AddList>
                </ListGroup>
              </Lists>
              <HScroll><span /></HScroll>
            </Workspace>
          </Below>
          <Overlay>
            <CardDialog />
            <VScroll />
          </Overlay>
          <Rim />
        </Window>
      </Shadow>
    </Desktop>
  );
}
